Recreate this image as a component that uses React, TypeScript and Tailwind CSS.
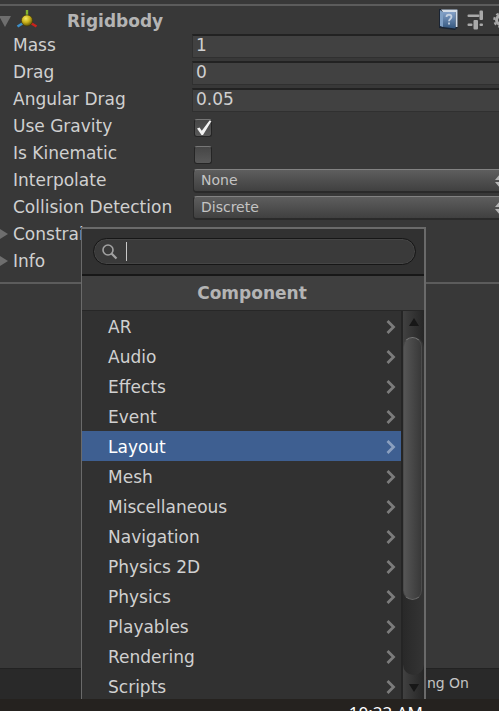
import type { ReactNode } from "react";

const categories = [
  "AR",
  "Audio",
  "Effects",
  "Event",
  "Layout",
  "Mesh",
  "Miscellaneous",
  "Navigation",
  "Physics 2D",
  "Physics",
  "Playables",
  "Rendering",
  "Scripts",
];

function RigidbodyIcon() {
  return (
    <svg width="22" height="22" viewBox="0 0 22 22" aria-hidden="true">
      <defs>
        <radialGradient id="ball" cx="40%" cy="32%" r="70%">
          <stop offset="0" stopColor="#f4ea62" />
          <stop offset="0.5" stopColor="#c9b21c" />
          <stop offset="1" stopColor="#5d5006" />
        </radialGradient>
      </defs>
      <path d="M11 0v8" stroke="#84b52c" strokeWidth="2.4" />
      <path d="M8 12.500l-6.500 4" stroke="#3d8fc9" strokeWidth="2.6" />
      <path d="M14 12.500l6.500 4" stroke="#c9231c" strokeWidth="2.6" />
      <circle cx="11" cy="10.500" r="5.600" fill="url(#ball)" stroke="#3d3608" strokeWidth="0.6" />
    </svg>
  );
}

function HelpIcon() {
  return (
    <svg width="20" height="22" viewBox="0 0 20 22" aria-hidden="true">
      <defs>
        <linearGradient id="cover" x1="0" y1="0" x2="0" y2="1">
          <stop offset="0" stopColor="#84a1c8" />
          <stop offset="1" stopColor="#34577f" />
        </linearGradient>
      </defs>
      <path d="M0 0h19v18l-3 3-16-2z" fill="#1a2433" />
      <path d="M1 1l3 2v15l-3-1z" fill="#7f9fc4" />
      <path d="M2 0.500h16.500v17.500h-2V3H4z" fill="#d5dde7" />
      <path d="M4 3h12.500v16.500L4 18z" fill="url(#cover)" />
      <path
        d="M7.500 8c0-3 5-3 5 0 0 2-2.500 2-2.500 4.200M10 13.500v2"
        fill="none"
        stroke="#c3d0e0"
        strokeWidth="1.800"
      />
    </svg>
  );
}

function PresetIcon() {
  return (
    <svg width="18" height="20" viewBox="0 0 18 20" aria-hidden="true" fill="#a9a9a9">
      <rect x="0.500" y="4.500" width="12" height="2.500" rx="1" />
      <rect x="12.500" y="0.500" width="3.500" height="9.500" rx="1" />
      <rect x="0.500" y="13.500" width="5" height="2.500" rx="1" />
      <rect x="6.500" y="10" width="4.500" height="9.500" rx="1" />
      <rect x="12.500" y="13.500" width="3.500" height="2.500" rx="1" />
    </svg>
  );
}

function GearIcon() {
  return (
    <svg width="16" height="16" viewBox="0 0 16 16" aria-hidden="true">
      <circle cx="8" cy="8" r="4.500" fill="none" stroke="#a9a9a9" strokeWidth="3" />
      <circle cx="8" cy="8" r="6.800" fill="none" stroke="#a9a9a9" strokeWidth="2" strokeDasharray="2.700 2.640" />
    </svg>
  );
}

function Row({ id, label, children }: { id: string; label: string; children: ReactNode }) {
  return (
    <div className="flex h-[27px] items-center">
      <label htmlFor={id} className="w-[192px] shrink-0 pb-0.5 pl-[13px]">
        {label}
      </label>
      {children}
    </div>
  );
}

function NumberRow({ id, label, value }: { id: string; label: string; value: string }) {
  return (
    <Row id={id} label={label}>
      <input
        id={id}
        defaultValue={value}
        className="-mr-2 h-6 min-w-0 flex-1 border border-t-2 border-[#303030] border-t-[#222222] bg-[#414141] px-[3px] pb-0.5 outline-none"
      />
    </Row>
  );
}

function CheckRow({ id, label, checked }: { id: string; label: string; checked?: boolean }) {
  return (
    <Row id={id} label={label}>
      <span className="relative ml-0.5 mt-0.5 size-[18px]">
        <input
          id={id}
          type="checkbox"
          defaultChecked={checked}
          className="peer block size-[18px] appearance-none rounded-[3px] border border-[#252525] border-t-[#777777] bg-linear-to-b from-[#464646] to-[#595959]"
        />
        <svg
          viewBox="0 0 18 18"
          aria-hidden="true"
          className="pointer-events-none absolute inset-0 hidden size-[18px] overflow-visible peer-checked:block"
        >
          <path d="M3 9.500l2.500-1 2.300 3.300L15.500 1.500l2 .5-8.500 14H7.500z" fill="#f2f2f2" />
        </svg>
      </span>
    </Row>
  );
}

function SelectRow({ id, label, value }: { id: string; label: string; value: string }) {
  return (
    <Row id={id} label={label}>
      <div className="relative -mr-2 ml-px min-w-0 flex-1">
        <select
          id={id}
          defaultValue={value}
          className="block h-6 w-full appearance-none rounded-[4px] border border-b-2 border-[#2a2a2a] border-t-[#828282] bg-linear-to-b from-[#5e5e5e] to-[#404040] px-[7px] text-sm leading-5 text-[#c4c4c4] outline-none"
        >
          <option>{value}</option>
        </select>
        <svg
          width="10"
          height="14"
          viewBox="0 0 10 14"
          aria-hidden="true"
          className="pointer-events-none absolute right-0.5 top-[5px]"
        >
          <path d="M5 0l5 6H0zM5 14l5-6H0z" fill="#b5b5b5" />
        </svg>
      </div>
    </Row>
  );
}

function Foldout({ label }: { label: string }) {
  return (
    <button type="button" className="flex h-[27px] w-full items-center pb-0.5 text-left">
      <span className="w-[13px]">
        <svg width="8" height="12" viewBox="0 0 8 12" aria-hidden="true">
          <path d="M0 1l8 5-8 5z" fill="#6e6e6e" />
        </svg>
      </span>
      {label}
    </button>
  );
}

function ComponentMenu() {
  return (
    <section
      aria-label="Add component"
      className="absolute bottom-0 left-[81px] top-[227px] flex w-[345px] flex-col overflow-hidden border-2 border-b-0 border-l-1 border-[#6a6a6a] bg-[#313131]"
    >
      <div className="shrink-0 border-b-2 border-[#171717] py-[9px] pl-[11px] pr-2">
        <label className="flex h-[27px] items-center rounded-full border border-[#161616] bg-[#3a3a3a] pl-[7px] pr-4 inset-shadow-[0_0_0_1px_#454545]">
          <svg width="18" height="18" viewBox="0 0 18 18" fill="none" stroke="#a2a2a2" aria-hidden="true">
            <circle cx="7" cy="7" r="5" strokeWidth="1.600" />
            <path d="M10.500 10.500l5 5" strokeWidth="2.200" />
          </svg>
          <span className="ml-[7px] h-[19px] w-px bg-[#c8c8c8]" />
          <input aria-label="Search components" className="min-w-0 flex-1 bg-transparent outline-none" />
        </label>
      </div>
      <h2 className="h-[35px] shrink-0 border-b border-[#272727] bg-[#3f3f3f] pr-0.5 text-center font-bold leading-[34px] text-[#b4b4b4]">
        Component
      </h2>
      <div className="flex min-h-0 flex-1">
        <ul className="min-w-0 flex-1 overflow-hidden">
          {categories.map((name) => (
            <li key={name}>
              <button
                type="button"
                className={`flex h-[30px] w-full items-center justify-between pl-[26px] pr-[5px] pt-0.5 text-left ${
                  name === "Layout" ? "bg-[#3e5f91] text-white" : ""
                }`}
              >
                {name}
                <svg
                  width="10"
                  height="14"
                  viewBox="0 0 10 14"
                  fill="none"
                  stroke={name === "Layout" ? "#8ba0bf" : "#7c7c7c"}
                  strokeWidth="2.800"
                  aria-hidden="true"
                >
                  <path d="M1.500 1l6 6-6 6" />
                </svg>
              </button>
            </li>
          ))}
        </ul>
        <div className="flex w-[23px] flex-col border-l-2 border-[#252525] bg-linear-to-r from-[#414141] to-[#262626]">
          <div className="flex h-[26px] items-center justify-center pb-1">
            <svg width="10" height="9" viewBox="0 0 10 9" aria-hidden="true">
              <path d="M5 0l5 8H0z" fill="#171717" />
            </svg>
          </div>
          <div className="flex-1 rounded-full bg-linear-to-r from-[#292929] to-[#343434] pr-0.5">
            <div className="h-[263px] rounded-full border border-[#4a4a4a] border-t-[#777777] border-b-[#666666] bg-linear-to-r from-[#565656] to-[#393939]" />
          </div>
          <div className="flex h-6 items-center justify-center">
            <svg width="10" height="9" viewBox="0 0 10 9" aria-hidden="true">
              <path d="M5 9l5-8H0z" fill="#171717" />
            </svg>
          </div>
        </div>
      </div>
    </section>
  );
}

export default function App() {
  return (
    <div className="flex h-screen flex-col overflow-hidden bg-[#383838] font-['DejaVu_Sans',Verdana,sans-serif] text-[17px] leading-6 text-[#d0d0d0]">
      <div className="relative flex min-h-0 flex-1 flex-col">
        <main className="flex-1 overflow-hidden pt-1">
          <header className="flex h-7 items-center border-t-2 border-[#5c5c5c] pt-1">
            <svg width="12" height="12" viewBox="0 0 12 12" aria-hidden="true">
              <path d="M-1 1h12L5 12z" fill="#6e6e6e" />
            </svg>
            <span className="ml-1">
              <RigidbodyIcon />
            </span>
            <h1 className="ml-[29px] flex-1 font-bold text-[#b4b4b4]">Rigidbody</h1>
            <div className="-mr-2.5 flex items-center gap-2 pb-0.5">
              <button type="button" aria-label="Help">
                <HelpIcon />
              </button>
              <button type="button" aria-label="Presets">
                <PresetIcon />
              </button>
              <button type="button" aria-label="Settings">
                <GearIcon />
              </button>
            </div>
          </header>
          <NumberRow id="mass" label="Mass" value="1" />
          <NumberRow id="drag" label="Drag" value="0" />
          <NumberRow id="angular-drag" label="Angular Drag" value="0.05" />
          <CheckRow id="use-gravity" label="Use Gravity" checked />
          <CheckRow id="is-kinematic" label="Is Kinematic" />
          <SelectRow id="interpolate" label="Interpolate" value="None" />
          <SelectRow id="collision-detection" label="Collision Detection" value="Discrete" />
          <Foldout label="Constraints" />
          <Foldout label="Info" />
          <hr className="mt-[7px] border-t-2 border-[#5c5c5c]" />
        </main>
        <footer className="h-[31px] border-t border-[#222222] bg-[#292929] pr-[30px] text-right text-sm leading-7 text-[#c4c4c4]">
          Auto Generate Lighting On
        </footer>
        <ComponentMenu />
      </div>
      <div className="h-3 shrink-0 overflow-hidden bg-[#25221f] pr-[76px] pt-1 text-right font-['Noto_Sans',sans-serif] text-[17px] leading-5 text-white">
        10:22 AM
      </div>
    </div>
  );
}
